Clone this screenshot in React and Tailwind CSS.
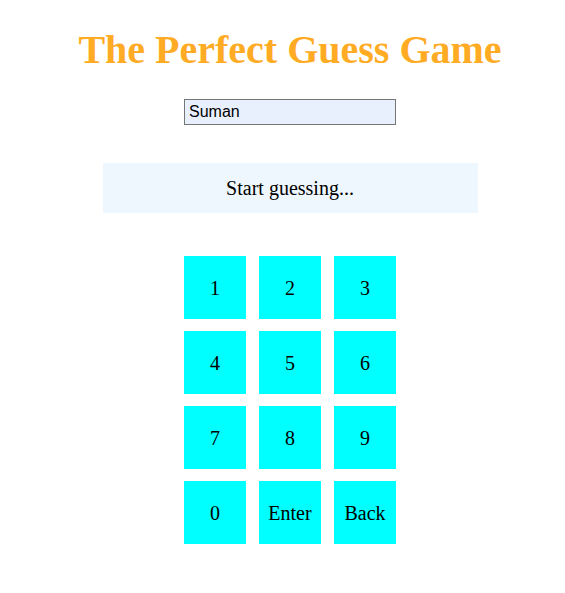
import React, { useState } from "react";

const keys = ["1", "2", "3", "4", "5", "6", "7", "8", "9", "0", "Enter", "Back"];

export default function App() {
  const [name, setName] = useState("Suman");
  const [message] = useState("Start guessing...");

  return (
    <div className="w-[565px] h-[593px] pl-[15px] bg-white flex flex-col items-center font-['Liberation_Serif',serif]">
      <h1 className="mt-[26px] text-[40px] leading-[48px] font-bold text-[#ffab24]">
        The Perfect Guess Game
      </h1>

      <input
        value={name}
        onChange={(e) => setName(e.target.value)}
        className="mt-[25px] w-[212px] h-[26px] px-[4px] bg-[#e8f0fe] border border-[#767676] text-[16px] text-black font-['Liberation_Sans',sans-serif] outline-none"
      />

      <div className="mt-[38px] w-[375px] h-[50px] bg-[#eff7fe] flex items-center justify-center text-[20px] text-black">
        {message}
      </div>

      <div className="mt-[43px] grid grid-cols-[62px_62px_62px] gap-x-[13px] gap-y-[12px]">
        {keys.map((k) => (
          <button
            key={k}
            className="w-[62px] h-[63px] bg-[#00ffff] flex items-center justify-center text-[20px] text-black font-['Liberation_Serif',serif]"
          >
            {k}
          </button>
        ))}
      </div>
    </div>
  );
}
